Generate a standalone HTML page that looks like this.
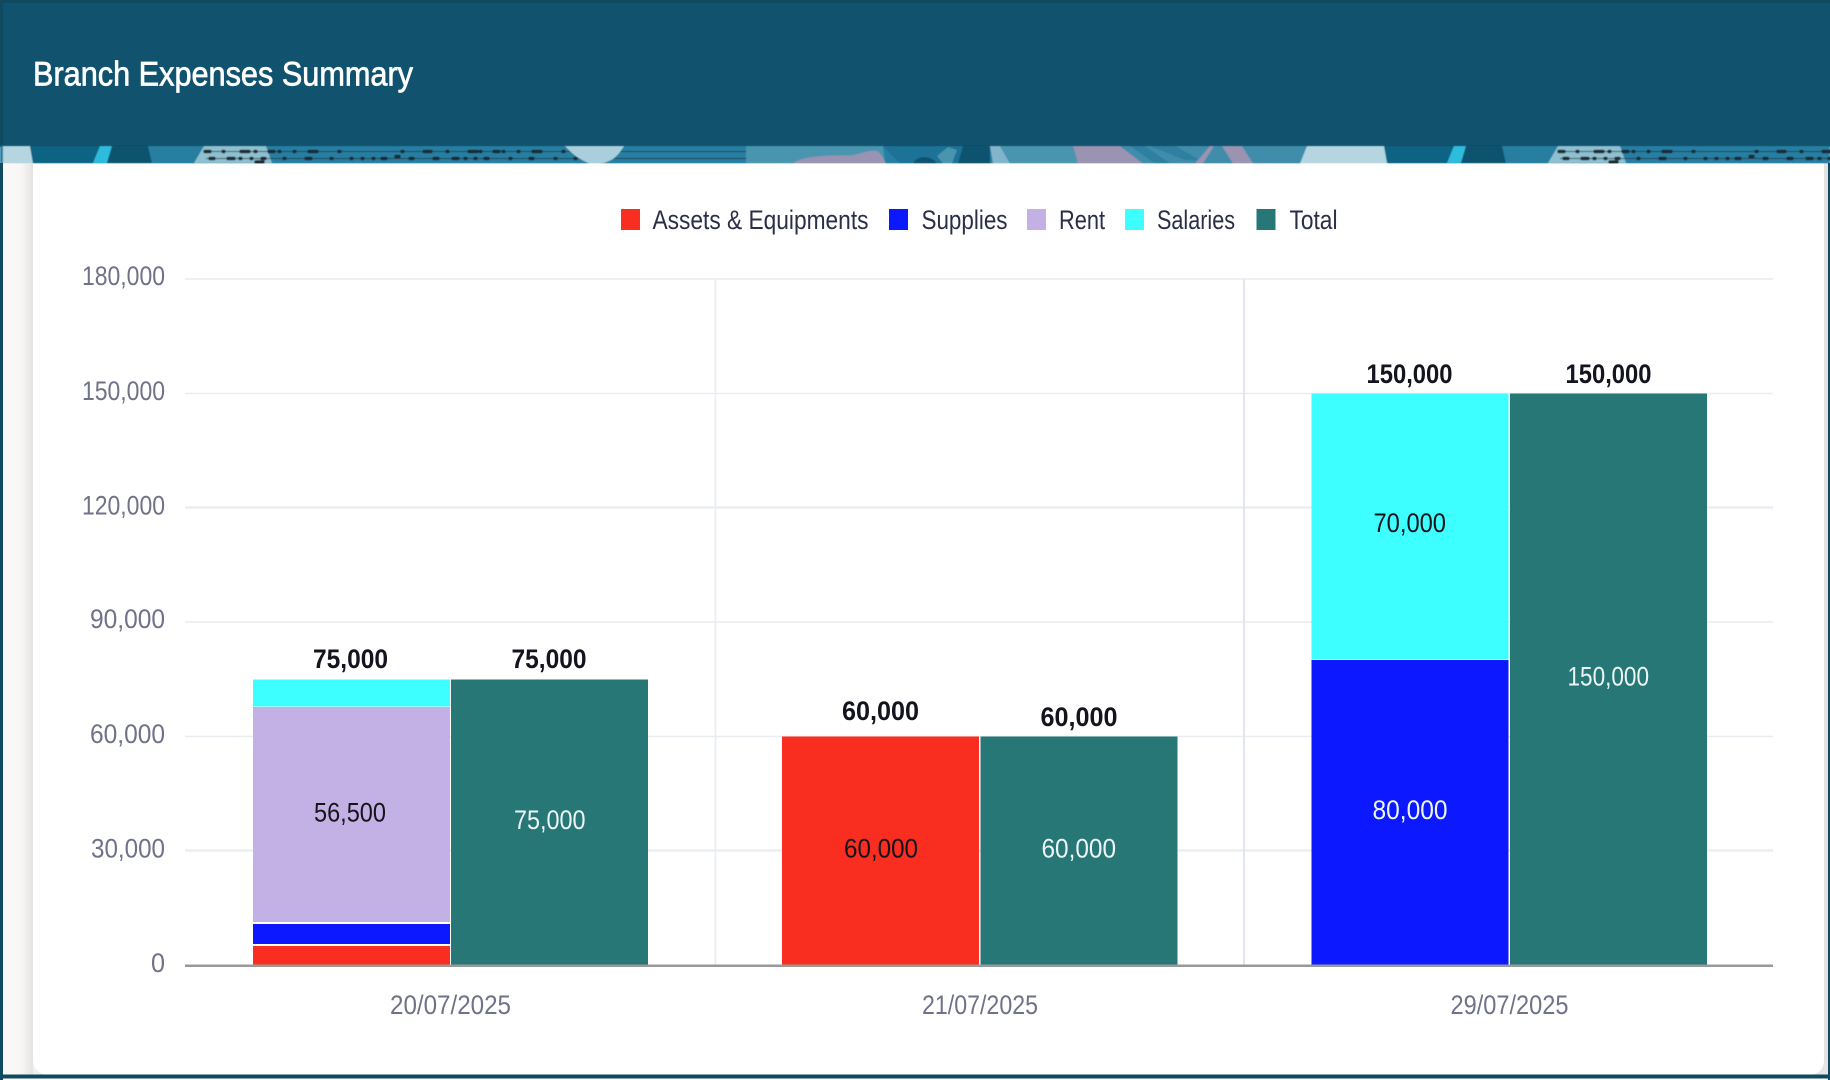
<!DOCTYPE html>
<html>
<head>
<meta charset="utf-8">
<title>Branch Expenses Summary</title>
<style>
html,body{margin:0;padding:0;background:#fff;width:1830px;height:1080px;overflow:hidden}
svg{display:block}
text{font-family:"Liberation Sans",sans-serif}
.y{font-size:27px;fill:#6f7288}
.x{font-size:27px;fill:#6f7288}
.lg{font-size:27px;fill:#2c2e48}
.b{font-size:27px;font-weight:700;fill:#14141f}
.d{font-size:27px;fill:#14141a}
.w{font-size:27px;fill:#ecf6f6}
</style>
</head>
<body>
<svg width="1830" height="1080" viewBox="0 0 1830 1080" xmlns="http://www.w3.org/2000/svg">
<defs>
<linearGradient id="sh" x1="0" x2="1" y1="0" y2="0">
<stop offset="0" stop-color="#f9f8f6"/><stop offset=".6" stop-color="#f8f7f5"/><stop offset="1" stop-color="#e6e4e2"/>
</linearGradient>
<filter id="bl"><feGaussianBlur stdDeviation="0.5"/></filter>
<g id="p1">
<polygon points="30,146 93,146 100,146 93,163 33,163" fill="#0f6383"/>
<polygon points="100,146 112,146 107,163 93,163" fill="#2fbcdc"/>
<polygon points="112,146 148,146 152,163 107,163" fill="#11526f"/>
<polygon points="148,146 204,146 194,163 152,163" fill="#257ea0"/>
<polygon points="204,146 266,146 272,163 194,163" fill="#8fc0d0"/>
<g stroke="#1b2a33" fill="none">
<line x1="204" y1="151.5" x2="746" y2="151.5" stroke-width="1" opacity=".75"/>
<line x1="206" y1="158.5" x2="746" y2="158.5" stroke-width="1" opacity=".75"/>
<g stroke-linecap="round" stroke-width="3.4">
<path d="M205 151.5h5M223 151.5h1M241 151.5h8M255 151.5h1M269 151.5h5M279 151.5h1M294 151.5h1M309 151.5h8M339 151.5h1M402 151.5h1M424 151.5h7M447 151.5h1M469 151.5h8M480 151.5h1M494 151.5h5M503 151.5h1M518 151.5h1M533 151.5h8M563 151.5h1"/>
<path d="M210 158.5h4M228 158.5h6M240 158.5h1M251 158.5h1M262 158.5h3M284 158.5h1M306 158.5h5M331 158.5h1M351 158.5h1M362 158.5h1M373 158.5h1M382 158.5h4M396 156.5h3M410 158.5h3M434 158.5h4M453 158.5h5M465 158.5h1M475 158.5h1M485 158.5h3M510 158.5h1M530 158.5h3M555 158.5h1M575 158.5h1M595 158.5h1M606 158.5h4"/>
<path d="M256 162h7"/>
</g>
</g>
</g>
</defs>

<!-- header -->
<rect width="1830" height="147" fill="#11536f"/>
<rect width="1830" height="3" fill="#0f4a60"/>
<rect width="3" height="147" fill="#0f4a60"/>
<rect y="145" width="1830" height="1.5" fill="#0f4d66"/>

<!-- strip -->
<g filter="url(#bl)">
<rect x="0" y="146" width="1830" height="17.5" fill="#257fa3"/>
<polygon points="3,146 30,146 33,163.5 3,163.5" fill="#b5d5e0"/>
<polygon points="746,146 883,146 885,163.5 746,163.5" fill="#4a95b0"/>
<path d="M793,163.5C800,156 830,155 850,155.500C858,155 866,150 877,151C882,154 884,160 886,163.5Z" fill="#9a93b2"/>
<polygon points="883,146 963,146 958,163.500 900,163.500" fill="#1a7297"/>
<polygon points="937,156 948,147 957,150 952,163.500 943,163.500" fill="#4a95b0"/>
<path d="M913,163.500C916,156 930,154 937,163.500Z" fill="#115270"/>
<polygon points="963,146 990,146 990,163.500 958,163.500" fill="#115270"/>
<polygon points="990,146 1000,146 1010,163.500 993,163.500" fill="#82b5cb"/>
<polygon points="1000,146 1073,146 1078,163.500 1010,163.500" fill="#4a95b0"/>
<polygon points="1073,146 1120,146 1143,163.500 1078,163.500" fill="#9a93b2"/>
<polygon points="1120,146 1307,146 1300,163.500 1143,163.500" fill="#3f8dab"/>
<polygon points="1130,146 1145,146 1170,163.500 1155,163.500" fill="#2f7fa0"/>
<polygon points="1150,146 1175,146 1200,160 1185,160" fill="#2f7fa0"/>
<polygon points="1210,146 1214,146 1203,163.500 1195,163.500" fill="#9a93b2"/>
<polygon points="1222,146 1242,146 1253,163.500 1233,163.500" fill="#9a93b2"/>
<polygon points="1307,146 1384,146 1388,163.500 1300,163.500" fill="#b5d5e0"/>
<use href="#p1"/>
<path d="M565,146H624C618,156 612,162 600,163.500H590C580,160 572,154 565,146Z" fill="#a9cfdc"/>
<use href="#p1" x="1354"/>
</g>

<!-- body -->
<rect x="0" y="163.500" width="1830" height="917" fill="#fff"/>
<rect x="3" y="163.500" width="30" height="911" fill="url(#sh)"/>
<rect x="1824" y="163.500" width="4" height="911" fill="#e4e2e0"/>
<rect x="33" y="1060" width="14" height="15" fill="#f2f0ee"/>
<path d="M33,1058V1060A15,15 0 0 0 48,1075H50V1058Z" fill="#fff"/>
<path d="M1824,1060V1061A14,14 0 0 1 1810,1075H1828V1060Z" fill="#e8e6e4"/>
<rect x="0" y="163" width="3" height="917" fill="#0f4a60"/>
<rect x="1828" y="163" width="2" height="917" fill="#0f4a60"/>
<rect x="0" y="1074.500" width="1830" height="4" fill="#0f4a60"/>

<!-- title -->
<text x="33" y="85.500" font-size="34" fill="#fff" stroke="#fff" stroke-width=".7" textLength="380" lengthAdjust="spacingAndGlyphs">Branch Expenses Summary</text>

<!-- legend -->
<rect x="621" y="209" width="19" height="21" fill="#f92d20"/>
<text class="lg" x="652.500" y="229" textLength="216" lengthAdjust="spacingAndGlyphs">Assets &amp; Equipments</text>
<rect x="889" y="209" width="19" height="21" fill="#0c18ff"/>
<text class="lg" x="921.500" y="229" textLength="86" lengthAdjust="spacingAndGlyphs">Supplies</text>
<rect x="1027" y="209" width="19" height="21" fill="#c3b1e6"/>
<text class="lg" x="1059" y="229" textLength="46" lengthAdjust="spacingAndGlyphs">Rent</text>
<rect x="1125" y="209" width="19" height="21" fill="#3effff"/>
<text class="lg" x="1157" y="229" textLength="78" lengthAdjust="spacingAndGlyphs">Salaries</text>
<rect x="1256.500" y="209" width="19" height="21" fill="#277777"/>
<text class="lg" x="1289.500" y="229" textLength="48" lengthAdjust="spacingAndGlyphs">Total</text>

<!-- grid -->
<g stroke="#e9ecf1" stroke-width="1.600">
<line x1="185" x2="1773" y1="279" y2="279"/>
<line x1="185" x2="1773" y1="393.500" y2="393.500"/>
<line x1="185" x2="1773" y1="507.500" y2="507.500" stroke-width="2.200"/>
<line x1="185" x2="1773" y1="622" y2="622"/>
<line x1="185" x2="1773" y1="736.500" y2="736.500"/>
<line x1="185" x2="1773" y1="850.500" y2="850.500" stroke-width="2.200"/>
<line x1="715.500" x2="715.500" y1="279" y2="965"/>
<line x1="1244" x2="1244" y1="279" y2="965" stroke="#e2e5ec" stroke-width="2"/>
</g>

<!-- y labels -->
<text class="y" x="82" y="285" textLength="83" lengthAdjust="spacingAndGlyphs">180,000</text>
<text class="y" x="82" y="400" textLength="83" lengthAdjust="spacingAndGlyphs">150,000</text>
<text class="y" x="82" y="514.500" textLength="83" lengthAdjust="spacingAndGlyphs">120,000</text>
<text class="y" x="90" y="628" textLength="75" lengthAdjust="spacingAndGlyphs">90,000</text>
<text class="y" x="90" y="743" textLength="75" lengthAdjust="spacingAndGlyphs">60,000</text>
<text class="y" x="91" y="857.500" textLength="74" lengthAdjust="spacingAndGlyphs">30,000</text>
<text class="y" x="151" y="972" textLength="14" lengthAdjust="spacingAndGlyphs">0</text>

<!-- bars group 1 -->
<rect x="253" y="679.500" width="197" height="27" fill="#3effff"/>
<rect x="253" y="707" width="197" height="215" fill="#c3b1e6"/>
<rect x="253" y="924" width="197" height="20" fill="#0c18ff"/>
<rect x="253" y="946" width="197" height="19" fill="#f92d20"/>
<rect x="451" y="679.500" width="197" height="285.500" fill="#277777"/>
<!-- bars group 2 -->
<rect x="782" y="736.500" width="197" height="228.500" fill="#f92d20"/>
<rect x="980.500" y="736.500" width="197" height="228.500" fill="#277777"/>
<!-- bars group 3 -->
<rect x="1311.500" y="393.500" width="197" height="266" fill="#3effff"/>
<rect x="1311.500" y="660" width="197" height="305" fill="#0c18ff"/>
<rect x="1510" y="393.500" width="197" height="571.500" fill="#277777"/>

<!-- axis -->
<rect x="185" y="964.500" width="1588" height="2.500" fill="#999"/>

<!-- x labels -->
<text class="x" x="390" y="1014" textLength="121" lengthAdjust="spacingAndGlyphs">20/07/2025</text>
<text class="x" x="922" y="1014" textLength="116" lengthAdjust="spacingAndGlyphs">21/07/2025</text>
<text class="x" x="1450.500" y="1014" textLength="118" lengthAdjust="spacingAndGlyphs">29/07/2025</text>

<!-- totals -->
<text class="b" x="313" y="668" textLength="75" lengthAdjust="spacingAndGlyphs">75,000</text>
<text class="b" x="511.500" y="668" textLength="75" lengthAdjust="spacingAndGlyphs">75,000</text>
<text class="b" x="842" y="720" textLength="77" lengthAdjust="spacingAndGlyphs">60,000</text>
<text class="b" x="1040.500" y="726" textLength="77" lengthAdjust="spacingAndGlyphs">60,000</text>
<text class="b" x="1366.500" y="383" textLength="86" lengthAdjust="spacingAndGlyphs">150,000</text>
<text class="b" x="1565.500" y="383" textLength="86" lengthAdjust="spacingAndGlyphs">150,000</text>

<!-- inner labels -->
<text class="d" x="314" y="821.500" textLength="72" lengthAdjust="spacingAndGlyphs">56,500</text>
<text class="w" x="514" y="829" textLength="71.500" lengthAdjust="spacingAndGlyphs">75,000</text>
<text class="d" x="844" y="857.500" textLength="74" lengthAdjust="spacingAndGlyphs">60,000</text>
<text class="w" x="1041.500" y="857.500" textLength="74.500" lengthAdjust="spacingAndGlyphs">60,000</text>
<text class="d" x="1373.500" y="532" textLength="72.500" lengthAdjust="spacingAndGlyphs">70,000</text>
<text class="w" x="1567.500" y="685.500" textLength="81.500" lengthAdjust="spacingAndGlyphs">150,000</text>
<text class="w" x="1372.500" y="819" textLength="75" lengthAdjust="spacingAndGlyphs">80,000</text>
</svg>
</body>
</html>
